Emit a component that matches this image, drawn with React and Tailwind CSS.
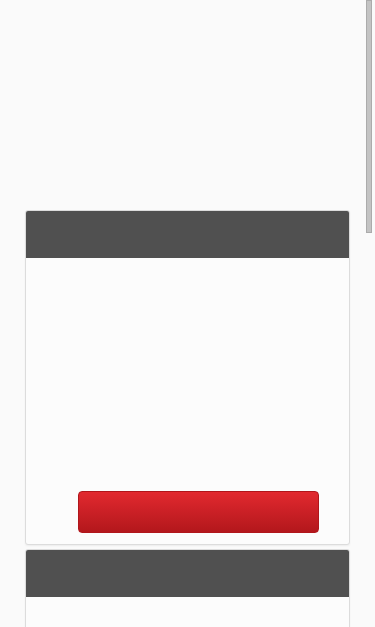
const cards = [1, 2, 3, 4];

function Card() {
  return (
    <div className="w-[325px] rounded-[3px] border border-[#dcdcdc] bg-[#fcfcfc] shadow-[0_1px_2px_rgba(0,0,0,0.06)] overflow-hidden">
      <div className="h-[47px] bg-[#505050]" />
      <div className="h-[286px] flex flex-col justify-end pb-[11px] pl-[52px] pr-[30px]">
        <button className="h-[42px] w-full rounded-[4px] bg-gradient-to-b from-[#e2292f] to-[#b3171c] border border-[#b0161b]" />
      </div>
    </div>
  );
}

export default function App() {
  return (
    <div className="relative h-[627px] w-[375px] overflow-hidden bg-[#fafafa] font-['Liberation_Sans',sans-serif]">
      <div className="pt-[210px] pb-[125px] pl-[25px] flex flex-col gap-[4px]">
        {cards.map((c) => (
          <Card key={c} />
        ))}
      </div>
      {/* scrollbar thumb */}
      <div className="absolute top-0 right-[3px] h-[233px] w-[6px] bg-[#c3c3c3] border border-[#ababab]" />
    </div>
  );
}
